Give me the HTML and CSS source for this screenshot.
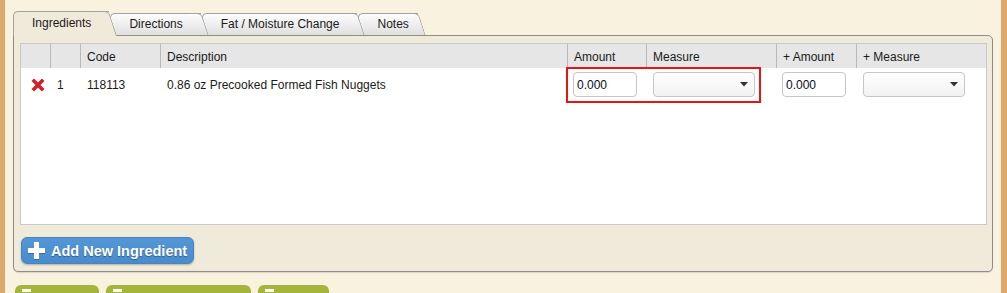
FILE: index.html
```html
<!DOCTYPE html>
<html lang="en">
<head>
<meta charset="utf-8"/>
<title>Recipe - Ingredients</title>
<meta content="width=device-width, initial-scale=1.0" name="viewport"/>
<link rel="stylesheet" href="styles.css">
</head>
<body>
<div class="page">
<div class="tabs">
<div class="tab active">Ingredients</div>
<div class="tab">Directions</div>
<div class="tab">Fat / Moisture Change</div>
<div class="tab">Notes</div>
</div>
<div class="panel">
<div class="grid">
<table>
<thead>
<tr>
<th class="c-del"></th>
<th class="c-num"></th>
<th class="c-code">Code</th>
<th>Description</th>
<th class="c-amt">Amount</th>
<th class="c-meas">Measure</th>
<th class="c-plus">+ Amount</th>
<th class="c-meas">+ Measure</th>
</tr>
</thead>
<tbody>
<tr>
<td class="c-del"><svg class="del-icon" width="14" height="14" viewBox="0 0 14 14"><path d="M1.8 1.8 L12.2 12.2 M12.2 1.8 L1.8 12.2" stroke="#cf1f2a" stroke-width="3.6"/></svg></td>
<td>1</td>
<td>118113</td>
<td>0.86 oz Precooked Formed Fish Nuggets</td>
<td><input class="num" type="text" value="0.000"/></td>
<td><div class="select"><svg width="8" height="5" viewBox="0 0 8 5"><polygon points="0,0 8,0 4,4.5" fill="#333"/></svg></div></td>
<td><input class="num" type="text" value="0.000"/></td>
<td><div class="select"><svg width="8" height="5" viewBox="0 0 8 5"><polygon points="0,0 8,0 4,4.5" fill="#333"/></svg></div></td>
</tr>
</tbody>
</table>
<div class="highlight"></div>
</div>
<button class="add-btn" type="button"><svg width="17" height="17" viewBox="0 0 17 17"><rect x="6" y="0" width="5" height="17" fill="#fff"/><rect x="0" y="6" width="17" height="5" fill="#fff"/></svg>Add New Ingredient</button>
</div>
<div class="actions">
<button class="act" style="width: 84px" type="button" title="Save"><span class="act-icon"></span></button>
<button class="act" style="width: 145px" type="button" title="Save and Close"><span class="act-icon"></span></button>
<button class="act" style="width: 71px" type="button" title="Close"><span class="act-icon"></span></button>
</div>
</div>
</body>
</html>
```
FILE: styles.css
```css
body { margin: 0; font-family: "Liberation Sans", Arial, sans-serif; font-size: 12px; color: #1a1a1a; background: #f8f2df; overflow: hidden; }
.page {
    min-height: 293px;
    box-sizing: border-box;
    border-left: 5px solid #dca86c;
    border-right: 6px solid #dca86c;
    padding: 11px 8px 0 8px;
}

/* tabs */
.tabs {
    display: flex;
    align-items: flex-end;
    height: 25px;
}
.tab {
    position: relative;
    height: 22px;
    line-height: 20px;
    padding: 0 18px;
    margin-right: 1px;
    border: 1px solid #a2a2a2;
    border-right: 0;
    border-bottom: 0;
    border-top-left-radius: 5px;
    background: linear-gradient(#fdfdfd, #dedede);
    white-space: nowrap;
}
.tab::after {
    content: "";
    position: absolute;
    z-index: -1;
    top: -1px;
    bottom: 0;
    right: -8px;
    width: 16px;
    background: inherit;
    border-top: 1px solid #a2a2a2;
    border-right: 1px solid #a2a2a2;
    border-top-right-radius: 5px;
    transform: skewX(18deg);
    transform-origin: bottom;
}
.tab:nth-child(2) { z-index: 3; }
.tab:nth-child(3) { z-index: 2; }
.tab:nth-child(4) { z-index: 1; padding-right: 9px; }
.tab.active {
    z-index: 5;
    height: 24px;
    line-height: 22px;
    background: #f0eadb;
}

/* panel */
.panel {
    position: relative;
    z-index: 4;
    margin-top: -1px;
    border: 1px solid #8d8d8d;
    border-radius: 0 5px 5px 5px;
    background: #f0eadb;
    padding: 7px 5px 7px 6px;
    box-shadow: 0 1px 1px rgba(0,0,0,0.12);
}
.grid {
    position: relative;
    height: 182px;
    box-sizing: border-box;
    border: 1px solid #c9c9c9;
    background: #fff;
}
.grid table {
    width: 100%;
    table-layout: fixed;
    border-collapse: separate;
    border-spacing: 0;
}
.grid th, .grid td {
    box-sizing: border-box;
    padding: 0 6px;
    text-align: left;
    font-weight: normal;
    white-space: nowrap;
}
.grid th {
    height: 24px;
    padding-top: 1px;
    background: #e6e6e6;
}
.grid th + th { border-left: 1px solid #b9b9b9; }
.grid td { padding-top: 4px; padding-bottom: 4px; height: 33px; }
.grid td + td { border-left: 1px solid transparent; }
.c-del { width: 29px; }
.c-num { width: 30px; }
.c-code { width: 80px; }
.c-amt { width: 79px; }
.c-plus { width: 80px; }
.c-meas { width: 130px; }
td.c-del { padding-left: 10px; padding-right: 0; }
.del-icon { display: block; margin-top: 1px; }

.num {
    display: block;
    width: 64px;
    height: 25px;
    box-sizing: border-box;
    margin-left: -1px;
    padding: 0 3px;
    border: 1px solid #c6c6c6;
    border-radius: 4px;
    font-family: "Liberation Sans", Arial, sans-serif;
    font-size: 12px;
    color: #0a0a1e;
    background: #fff;
}
.select {
    display: flex;
    align-items: center;
    justify-content: flex-end;
    width: 102px;
    height: 25px;
    box-sizing: border-box;
    padding-right: 6px;
    border: 1px solid #c6c6c6;
    border-radius: 4px;
    background: linear-gradient(#fff, #f2f2f2);
}
.highlight {
    position: absolute;
    left: 545px;
    top: 23px;
    width: 195px;
    height: 36px;
    box-sizing: border-box;
    border: 2px solid #e51515;
}

.add-btn {
    display: flex;
    align-items: center;
    gap: 6px;
    height: 27px;
    margin: 12px 0 0 1px;
    padding: 0 6px 0 6px;
    border: 1px solid #4584c4;
    border-radius: 6px;
    background: linear-gradient(#5396d5, #4a8bcc);
    color: #fff;
    font-family: "Liberation Sans", Arial, sans-serif;
    font-size: 14.5px;
    font-weight: bold;
    text-shadow: 0 1px 1px rgba(0,0,0,0.35);
    box-shadow: 0 1px 2px rgba(0,0,0,0.25);
}
.add-btn svg { filter: drop-shadow(0 1px 0 rgba(0,0,0,0.25)); }

.actions {
    display: flex;
    gap: 7px;
    margin: 13px 0 0 2px;
}
.act {
    display: flex;
    height: 30px;
    padding: 4px 0 0 7px;
    border: 0;
    border-radius: 6px 6px 0 0;
    background: #a5b43a;
}
.act-icon {
    display: block;
    width: 9px;
    height: 12px;
    border-top: 3px solid #fff;
    box-sizing: border-box;
}
```
